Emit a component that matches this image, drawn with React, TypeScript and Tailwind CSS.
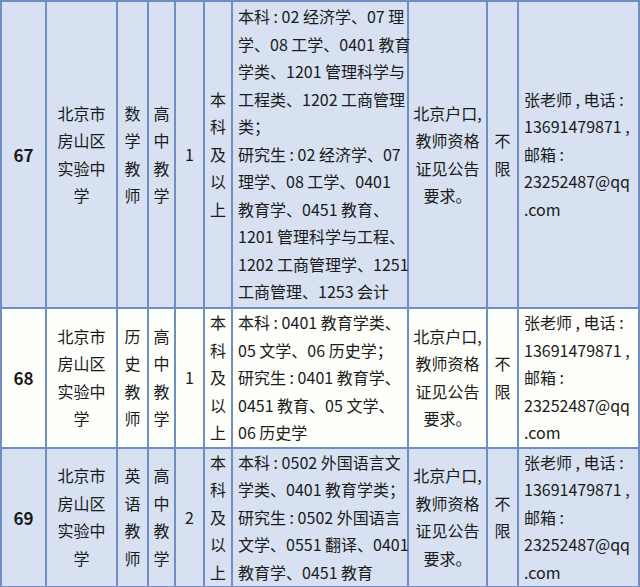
const rows = [
  {
    no: "67",
    height: "h-[307px]",
    bg: "bg-[#d7e1f1]",
    school: ["北京市", "房山区", "实验中", "学"],
    post: ["数", "学", "教", "师"],
    count: "1",
    major: [
      "本科 : 02 经济学、07 理",
      "学、08 工学、0401 教育",
      "学类、1201 管理科学与",
      "工程类、1202 工商管理",
      "类；",
      "研究生 : 02 经济学、07",
      "理学、08 工学、0401",
      "教育学、0451 教育、",
      "1201 管理科学与工程、",
      "1202 工商管理学、1251",
      "工商管理、1253 会计",
    ],
  },
  {
    no: "68",
    height: "h-[139px]",
    bg: "bg-[#fefefa]",
    school: ["北京市", "房山区", "实验中", "学"],
    post: ["历", "史", "教", "师"],
    count: "1",
    major: [
      "本科 : 0401 教育学类、",
      "05 文学、06 历史学；",
      "研究生 : 0401 教育学、",
      "0451 教育、05 文学、",
      "06 历史学",
    ],
  },
  {
    no: "69",
    height: "h-[139px]",
    bg: "bg-[#d7e1f1]",
    school: ["北京市", "房山区", "实验中", "学"],
    post: ["英", "语", "教", "师"],
    count: "2",
    major: [
      "本科 : 0502 外国语言文",
      "学类、0401 教育学类；",
      "研究生 : 0502 外国语言",
      "文学、0551 翻译、0401",
      "教育学、0451 教育",
    ],
  },
];

const level = ["本", "科", "及", "以", "上"];
const grade = ["高", "中", "教", "学"];
const req = ["北京户口,", "教师资格", "证见公告", "要求。"];
const contact = ["张老师 , 电话 :", "13691479871 ,", "邮箱 :", "23252487@qq", ".com"];

function Lines({ items, className = "" }: { items: string[]; className?: string }) {
  return (
    <div className={className}>
      {items.map((t, i) => (
        <div key={i} className="whitespace-nowrap">
          {t}
        </div>
      ))}
    </div>
  );
}

const cell = "border-2 border-[#6f8ec4] align-middle p-0";

export default function App() {
  return (
    <div className="w-[640px] h-[587px] bg-[#fefefa] text-[#1a1a1a] text-[16px] leading-[27.5px] font-['Noto_Sans_CJK_SC',sans-serif]">
      <table className="table-fixed border-collapse w-[638px]">
        <colgroup>
          <col className="w-[45px]" />
          <col className="w-[71px]" />
          <col className="w-[31px]" />
          <col className="w-[27px]" />
          <col className="w-[29px]" />
          <col className="w-[28px]" />
          <col className="w-[176px]" />
          <col className="w-[79px]" />
          <col className="w-[31px]" />
          <col className="w-[121px]" />
        </colgroup>
        <tbody>
          {rows.map((r) => (
            <tr key={r.no} className={`${r.height} ${r.bg}`}>
              <td className={`${cell} text-center font-bold text-[17px]`}>{r.no}</td>
              <td className={`${cell} text-center`}>
                <Lines items={r.school} />
              </td>
              <td className={`${cell} text-center`}>
                <Lines items={r.post} />
              </td>
              <td className={`${cell} text-center`}>
                <Lines items={grade} />
              </td>
              <td className={`${cell} text-center`}>{r.count}</td>
              <td className={`${cell} text-center`}>
                <Lines items={level} />
              </td>
              <td className={`${cell} pl-[5px]`}>
                <Lines items={r.major} />
              </td>
              <td className={`${cell} text-center`}>
                <Lines items={req} />
              </td>
              <td className={`${cell} text-center`}>
                <Lines items={["不", "限"]} />
              </td>
              <td className={`${cell} pl-[5px]`}>
                <Lines items={contact} />
              </td>
            </tr>
          ))}
        </tbody>
      </table>
    </div>
  );
}
